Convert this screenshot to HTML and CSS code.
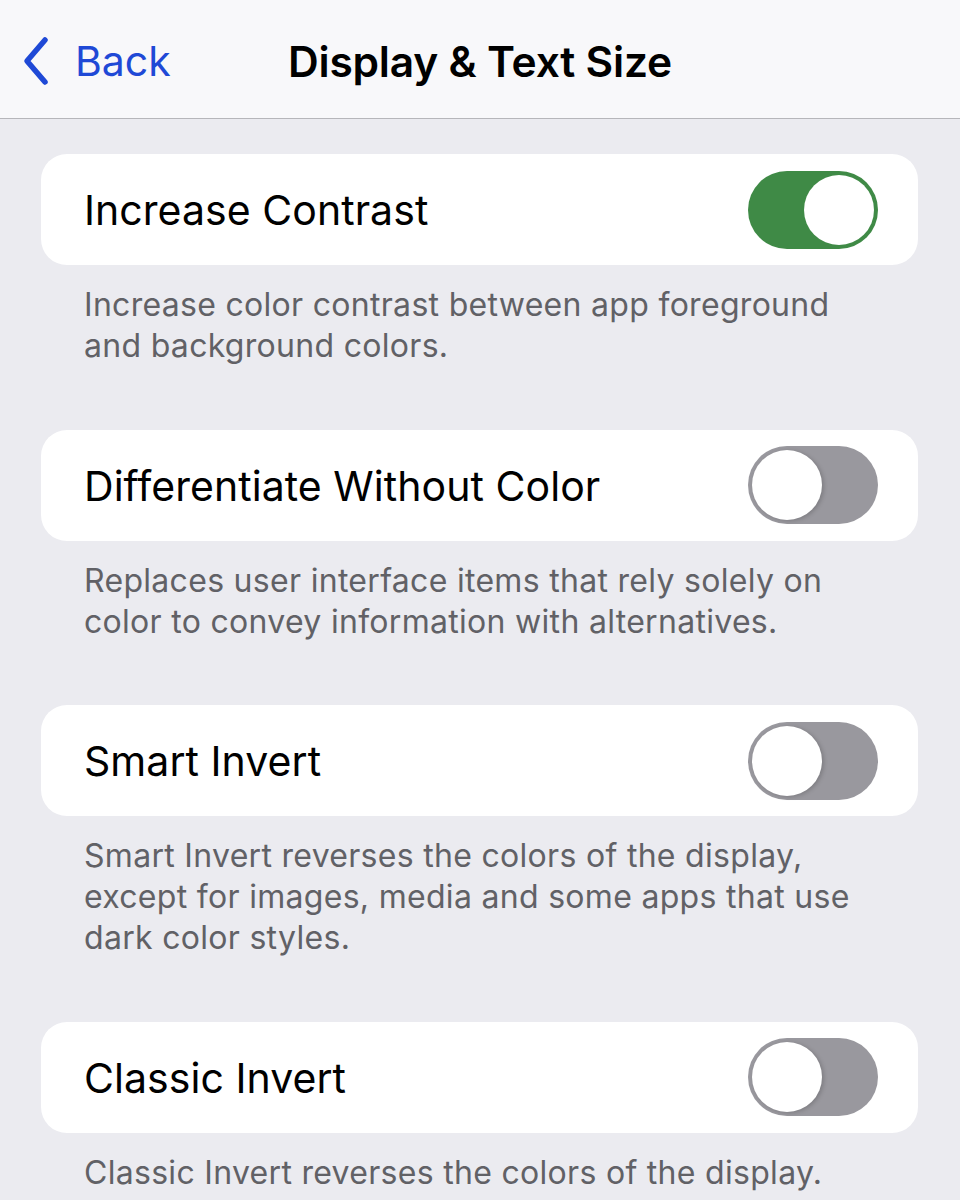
FILE: index.html
```html
<!DOCTYPE html>
<html lang="en">
<head>
<meta charset="utf-8">
<title>Display &amp; Text Size</title>
<link rel="stylesheet" href="styles.css">
</head>
<body>
<header class="nav">
  <a class="back" href="#">
    <svg class="chev" width="30" height="50" viewBox="0 0 30 50"><path d="M24 4 L6 25 L24 46" fill="none" stroke="currentColor" stroke-width="5.5" stroke-linecap="round" stroke-linejoin="round"/></svg>
    <span>Back</span>
  </a>
  <h1 class="title">Display &amp; Text Size</h1>
</header>
<main class="content">
  <section class="group">
    <div class="card">
      <span class="label">Increase Contrast</span>
      <span class="toggle on"><span class="knob"></span></span>
    </div>
    <p class="desc">Increase color contrast between app foreground and background colors.</p>
  </section>
  <section class="group">
    <div class="card">
      <span class="label">Differentiate Without Color</span>
      <span class="toggle"><span class="knob"></span></span>
    </div>
    <p class="desc">Replaces user interface items that rely solely on color to convey information with alternatives.</p>
  </section>
  <section class="group">
    <div class="card">
      <span class="label">Smart Invert</span>
      <span class="toggle"><span class="knob"></span></span>
    </div>
    <p class="desc">Smart Invert reverses the colors of the display, except for images, media and some apps that use dark color styles.</p>
  </section>
  <section class="group">
    <div class="card">
      <span class="label">Classic Invert</span>
      <span class="toggle"><span class="knob"></span></span>
    </div>
    <p class="desc">Classic Invert reverses the colors of the display.</p>
  </section>
</main>
</body>
</html>
```
FILE: styles.css
```css
* { box-sizing: border-box; }
html, body { margin: 0; padding: 0; }
body {
  background: #ebebf0;
  font-family: Inter, "Noto Sans", "Liberation Sans", sans-serif;
  color: #000;
  width: 960px;
  height: 1200px;
  overflow: hidden;
}
.nav {
  height: 119px;
  background: #f8f8fa;
  border-bottom: 1px solid #b6b6ba;
  display: flex;
  align-items: center;
  justify-content: center;
  position: relative;
}
.back {
  position: absolute;
  left: 21px;
  top: 36px;
  display: flex;
  align-items: center;
  gap: 24px;
  color: #1f49d6;
  text-decoration: none;
  font-size: 41px;
  font-weight: 400;
}
.chev { display: block; }
.title {
  margin: 0;
  font-size: 42.5px;
  font-weight: 600;
  letter-spacing: -0.2px;
  padding-top: 4px;
}
.content {
  padding: 35px 42px 0 41px;
}
.group { margin-bottom: 63.5px; }
.card {
  background: #fff;
  border-radius: 26px;
  height: 111px;
  display: flex;
  align-items: center;
  justify-content: space-between;
  padding: 0 40px 0 43px;
}
.label {
  font-size: 41px;
  letter-spacing: 0.05px;
  padding-top: 1px;
}
.toggle {
  width: 130px;
  height: 78px;
  border-radius: 39px;
  background: #99989e;
  position: relative;
  flex: none;
}
.toggle.on { background: #3f8a46; }
.knob {
  position: absolute;
  top: 4px;
  left: 4px;
  width: 70px;
  height: 70px;
  border-radius: 50%;
  background: #fff;
  box-shadow: 2px 1px 4px rgba(0,0,0,0.18);
}
.toggle.on .knob { left: 56px; box-shadow: none; }
.desc {
  margin: 19px 0 0 0;
  padding: 0 50px 0 43px;
  font-size: 32px;
  line-height: 41px;
  color: #616166;
  letter-spacing: 0.3px;
}
```
